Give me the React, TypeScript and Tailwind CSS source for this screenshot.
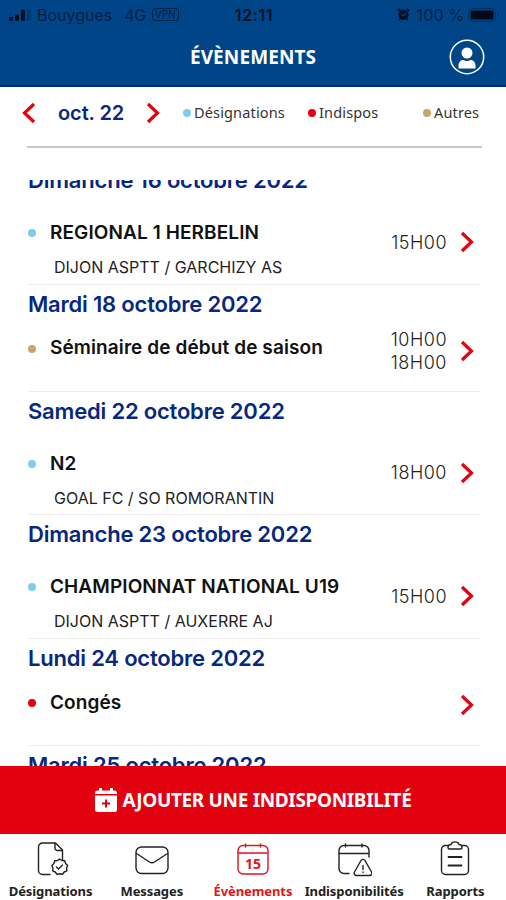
import type { ReactNode } from 'react'
import clsx from 'clsx'

type EventItem = {
  date: string
  title: string
  teams?: string
  times: string[]
  dot: string
}

const BLUE_DOT = 'bg-[#7ccbf5]'
const RED_DOT = 'bg-[#e3000f]'
const GOLD_DOT = 'bg-[#cba468]'

const events: EventItem[] = [
  { date: 'Dimanche 16 octobre 2022', title: 'REGIONAL 1 HERBELIN', teams: 'DIJON ASPTT / GARCHIZY AS', times: ['15H00'], dot: BLUE_DOT },
  { date: 'Mardi 18 octobre 2022', title: 'Séminaire de début de saison', times: ['10H00', '18H00'], dot: GOLD_DOT },
  { date: 'Samedi 22 octobre 2022', title: 'N2', teams: 'GOAL FC / SO ROMORANTIN', times: ['18H00'], dot: BLUE_DOT },
  { date: 'Dimanche 23 octobre 2022', title: 'CHAMPIONNAT NATIONAL U19', teams: 'DIJON ASPTT / AUXERRE AJ', times: ['15H00'], dot: BLUE_DOT },
  { date: 'Lundi 24 octobre 2022', title: 'Congés', times: [], dot: RED_DOT },
]

function Chevron({ left = false }: { left?: boolean }) {
  return (
    <svg viewBox="0 0 14 22" className={clsx('w-[14px] h-[22px] shrink-0', left && 'rotate-180')} fill="none" stroke="#e3000f" strokeWidth="3.200">
      <path d="M2 2 11.500 11 2 20" />
    </svg>
  )
}

function StatusBar() {
  return (
    <div className="grid grid-cols-[1fr_auto_1fr] items-center h-[29px] pl-[9px] pr-[7px] text-[#031f47] text-[16px] leading-none font-['Inter',sans-serif]">
      <div className="flex items-center">
        <svg viewBox="0 0 22 12" className="w-[22px] h-3" fill="#020f24">
          <rect x="0" y="8" width="4" height="4" rx="1" />
          <rect x="6" y="5.500" width="4" height="6.500" rx="1" />
          <rect x="12" y="0.500" width="4" height="11.500" rx="1" />
          <rect x="18" y="0" width="3.500" height="12" rx="1" opacity=".2" />
        </svg>
        <span className="ml-[6px]">Bouygues</span>
        <span className="ml-[12px] tracking-[-0.3px]">4G</span>
        <span className="ml-[6px] w-[27px] h-[13px] rounded-[3px] border border-[#031f47] text-[10px] leading-[11px] text-center">VPN</span>
      </div>
      <span className="font-semibold text-[#020f24] tracking-[0.6px]">12:11</span>
      <div className="flex items-center justify-end">
        <svg viewBox="0 0 14 14" className="w-[13px] h-[13px]" fill="#020f24">
          <path d="M1 3.500 3.500 1M13 3.500 10.500 1" stroke="#020f24" strokeWidth="2" />
          <circle cx="7" cy="7.500" r="5.500" />
          <path d="M2.500 13 4 11M11.500 13 10 11" stroke="#020f24" strokeWidth="1.500" />
          <path d="M4.500 6.500 7 8.500 9.500 5.500" fill="none" stroke="#004587" strokeWidth="1.200" />
        </svg>
        <span className="ml-[7px] tracking-[0.1px]">100 %</span>
        <svg viewBox="0 0 31 14" className="w-[31px] h-[14px] ml-[4px]">
          <rect x=".5" y=".5" width="27" height="13" rx="4" fill="none" stroke="#03305f" />
          <rect x="2.500" y="2.500" width="23" height="9" rx="1.500" fill="#010a18" />
          <path d="M30 5v4" stroke="#03305f" strokeWidth="1.500" />
        </svg>
      </div>
    </div>
  )
}

function Legend({ dot, label, className }: { dot: string; label: string; className?: string }) {
  return (
    <div className={clsx('flex items-center gap-[3px] text-[14.500px] tracking-[0.15px] text-[#333] whitespace-nowrap', className)}>
      <span className={clsx('size-2 rounded-full', dot)} />
      {label}
    </div>
  )
}

function DateHeading({ children }: { children: ReactNode }) {
  return (
    <h2 className="h-[40px] leading-[38px] text-[22px] tracking-[-0.2px] font-semibold text-[#06287f] whitespace-nowrap font-['Inter',sans-serif]">
      {children}
    </h2>
  )
}

function EventSection({ event }: { event: EventItem }) {
  const { date, title, teams, times, dot } = event
  return (
    <section className={clsx("shrink-0 border-b border-[#ececec] font-['Inter',sans-serif]", teams ? 'h-[123.500px]' : 'h-[107.400px]')}>
      <DateHeading>{date}</DateHeading>
      <div className={clsx('flex justify-between', teams ? 'pt-[17px]' : 'pt-[2px]')}>
        <div className={teams ? 'pt-[3px]' : 'pt-[10px]'}>
          <div className="flex items-center gap-[14px] h-[24px] text-[19px] tracking-[0.1px] font-semibold text-[#111] whitespace-nowrap">
            <span className={clsx('size-2 rounded-full', dot)} />
            {title}
          </div>
          {teams && <p className="pl-[26px] pt-[10px] text-[16px] leading-6 text-[#222] whitespace-nowrap">{teams}</p>}
        </div>
        <div className="flex items-center gap-[13px] h-[48px] mr-[6px]">
          <div className="text-[18px] leading-[23px] tracking-[0.500px] font-light text-[#222]">
            {times.map((time) => (
              <div key={time}>{time}</div>
            ))}
          </div>
          <Chevron />
        </div>
      </div>
    </section>
  )
}

function Tab({ label, active = false, children }: { label: string; active?: boolean; children: ReactNode }) {
  return (
    <button className={clsx('flex flex-col items-center w-[101.200px] pt-[6px]', active ? 'text-[#df1522]' : 'text-[#222]')}>
      <svg viewBox="0 0 36 38" className="w-9 h-[38px]" fill="none" stroke="currentColor" strokeWidth="1.400" strokeLinecap="round" strokeLinejoin="round">
        {children}
      </svg>
      <span className="mt-[4px] text-[13px] tracking-[-0.1px] leading-[18px] font-bold whitespace-nowrap">{label}</span>
    </button>
  )
}

export default function App() {
  return (
    <div className="flex flex-col w-[506px] h-[900px] bg-white overflow-hidden font-['Noto_Sans',sans-serif]">
      <header className="shrink-0 h-[87px] bg-[#004587] border-b-2 border-[#07257b]">
        <StatusBar />
        <div className="grid grid-cols-[1fr_auto_1fr] items-center h-[56px] px-[21px]">
          <h1 className="col-start-2 text-[19px] tracking-[0.1px] font-bold text-white">ÉVÈNEMENTS</h1>
          <svg viewBox="0 0 36 36" className="size-9 justify-self-end" fill="white">
            <circle cx="18" cy="18" r="16.700" fill="none" stroke="white" strokeWidth="1.500" />
            <circle cx="18" cy="14" r="5.500" />
            <path d="M9.500 29.500v-3c0-3.500 2.500-5.500 5-5.500 2 1.200 5 1.200 7 0 2.500 0 5 2 5 5.500v3z" />
          </svg>
        </div>
      </header>

      <div className="shrink-0 flex items-center h-[61px] ml-[27px] mr-6 border-b-2 border-[#c8c8c8]">
        <div className="flex items-center -ml-[5px] pb-[7px]">
          <Chevron left />
          <span className="ml-[22px] w-[66px] text-[20px] tracking-[-0.1px] font-semibold text-[#06287f] whitespace-nowrap font-['Inter',sans-serif]">oct. 22</span>
          <span className="ml-[22px]"><Chevron /></span>
        </div>
        <div className="flex-1 flex pb-[7px] pl-[23px]">
          <Legend dot={BLUE_DOT} label="Désignations" className="w-[125px]" />
          <Legend dot={RED_DOT} label="Indispos" className="w-[115px]" />
          <Legend dot={GOLD_DOT} label="Autres" />
        </div>
      </div>

      <main className="flex-1 min-h-0 mt-[32px] ml-7 mr-[26px] overflow-hidden">
        {/* list is scrolled a little under the month bar */}
        <div className="flex flex-col -mt-[19px]">
          {events.map((event) => (
            <EventSection key={event.date} event={event} />
          ))}
          <DateHeading>Mardi 25 octobre 2022</DateHeading>
        </div>
      </main>

      <button className="shrink-0 flex items-center justify-center gap-[6px] h-[68px] bg-[#e3000f] text-white text-[19px] tracking-[-0.340px] font-bold">
        <svg viewBox="0 0 22 24" className="w-[22px] h-6" fill="white">
          <path d="M0 6V5a2.500 2.500 0 0 1 2.500-2.500H4V0h3v2.500h8V0h3v2.500h1.500A2.500 2.500 0 0 1 22 5v1z" />
          <path d="M0 7.500h22V21.500a2.500 2.500 0 0 1-2.500 2.500h-17A2.500 2.500 0 0 1 0 21.500z" />
          <path d="M11 11.500v8M7 15.500h8" stroke="#e3000f" strokeWidth="2" />
        </svg>
        AJOUTER UNE INDISPONIBILITÉ
      </button>

      <nav className="shrink-0 flex h-[66px] bg-white">
        <Tab label="Désignations">
          <path d="M17 34.500H9.500a4 4 0 0 1-4-4V7a4 4 0 0 1 4-4h13l7 7v10M22 3v5a2.500 2.500 0 0 0 2.500 2.500h5" />
          <path d="m26.500 19 2.400 1.500 2.800.3.900 2.600 2 2-1 2.600.2 2.800-2.600 1.200-1.700 2.200-2.800-.5-2.800.5-1.700-2.200-2.500-1.200.2-2.800-1-2.600 2-2 .9-2.600 2.800-.3z" />
          <path d="m23.500 27 2 2 4-4" />
        </Tab>
        <Tab label="Messages">
          <rect x="2" y="7" width="32" height="26.500" rx="5.500" />
          <path d="m2.500 13.500 13 8.500q2.500 1.500 5 0l13-8.500" />
        </Tab>
        <Tab label="Évènements" active>
          <path d="M8 5.500h3M15 5.500h6M26 5.500h2a5 5 0 0 1 5 5v18.500a5 5 0 0 1-5 5H8a5 5 0 0 1-5-5V10.500a5 5 0 0 1 5-5M11 5.500h15M10.500 4v3M25.500 4v3M3 13h30" />
          <text x="18" y="29" textAnchor="middle" fill="currentColor" stroke="none" className="text-[14px] font-bold">15</text>
        </Tab>
        <Tab label="Indisponibilités">
          <path d="M13 33.500H8a5 5 0 0 1-5-5V10.500a5 5 0 0 1 5-5h20a5 5 0 0 1 5 5V17M9.500 4v3M26 4v3M3 13.500h30" />
          <path d="m25 20.500-6.500 11.500a2.300 2.300 0 0 0 2 3.500h13a2.300 2.300 0 0 0 2-3.500L29 20.500a2.300 2.300 0 0 0-4 0zM27 25.500v4M27 32v.5" />
        </Tab>
        <Tab label="Rapports">
          <path d="M11 5.500H8.500a4 4 0 0 0-4 4v21a4 4 0 0 0 4 4h19a4 4 0 0 0 4-4v-21a4 4 0 0 0-4-4H25" />
          <path d="M11 7.500c0-2 1.200-3 3-3 .8-3.500 7.200-3.500 8 0 1.800 0 3 1 3 3q0 1.500-1.500 1.500h-11Q11 9 11 7.500z" />
          <path d="M11.500 17h13M11.500 25.500h13" strokeWidth="1.800" />
        </Tab>
      </nav>
    </div>
  )
}
